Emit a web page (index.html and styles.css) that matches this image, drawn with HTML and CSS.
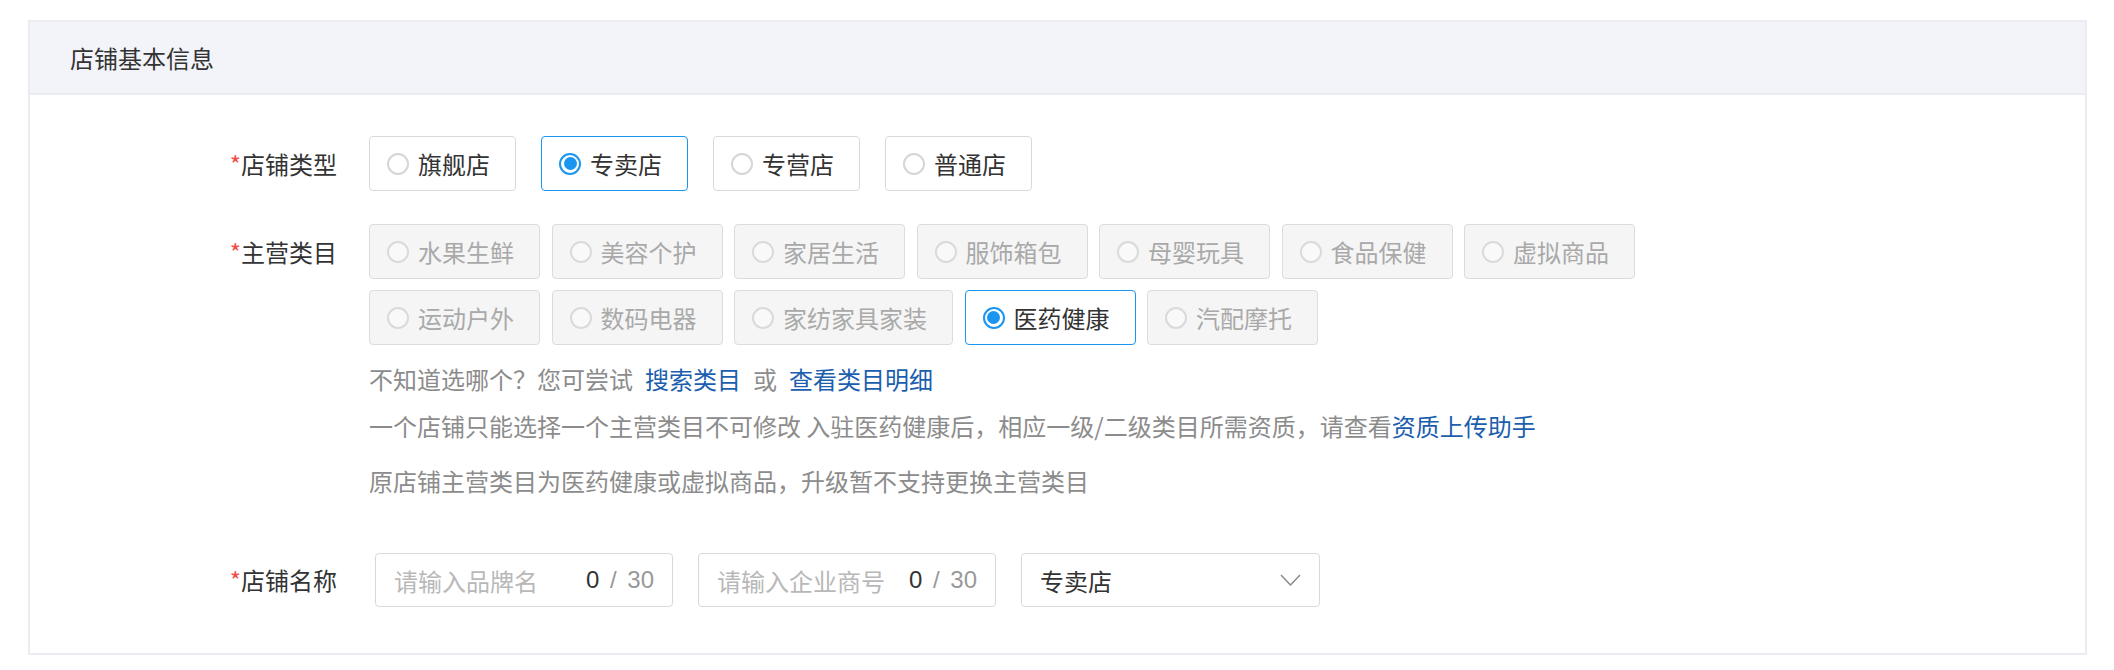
FILE: index.html
```html
<!DOCTYPE html>
<html lang="zh-CN">
<head>
<meta charset="utf-8">
<title>店铺基本信息</title>
<link rel="stylesheet" href="styles.css">
</head>
<body>
<div class="card">
  <div class="card-header">店铺基本信息</div>
  <div class="card-body">
    <div class="form-row">
      <div class="label"><span class="req">*</span>店铺类型</div>
      <div class="field">
        <div class="options">
          <div class="opt"><span class="radio"></span>旗舰店</div>
          <div class="opt selected"><span class="radio"></span>专卖店</div>
          <div class="opt"><span class="radio"></span>专营店</div>
          <div class="opt"><span class="radio"></span>普通店</div>
        </div>
      </div>
    </div>

    <div class="form-row row-cat">
      <div class="label"><span class="req">*</span>主营类目</div>
      <div class="field">
        <div class="cat-lines">
          <div class="options cats">
            <div class="opt disabled"><span class="radio"></span>水果生鲜</div>
            <div class="opt disabled"><span class="radio"></span>美容个护</div>
            <div class="opt disabled"><span class="radio"></span>家居生活</div>
            <div class="opt disabled"><span class="radio"></span>服饰箱包</div>
            <div class="opt disabled"><span class="radio"></span>母婴玩具</div>
            <div class="opt disabled"><span class="radio"></span>食品保健</div>
            <div class="opt disabled"><span class="radio"></span>虚拟商品</div>
          </div>
          <div class="options cats">
            <div class="opt disabled"><span class="radio"></span>运动户外</div>
            <div class="opt disabled"><span class="radio"></span>数码电器</div>
            <div class="opt disabled"><span class="radio"></span>家纺家具家装</div>
            <div class="opt selected"><span class="radio"></span>医药健康</div>
            <div class="opt disabled"><span class="radio"></span>汽配摩托</div>
          </div>
        </div>
        <div class="hint hint-1">不知道选哪个？您可尝试<a class="link link-first" href="#">搜索类目</a><span class="or">或</span><a class="link" href="#">查看类目明细</a></div>
        <div class="hint hint-2">一个店铺只能选择一个主营类目不可修改 入驻医药健康后，相应一级/二级类目所需资质，请查看<a class="link" href="#">资质上传助手</a></div>
        <div class="hint hint-3">原店铺主营类目为医药健康或虚拟商品，升级暂不支持更换主营类目</div>
      </div>
    </div>

    <div class="form-row row-name">
      <div class="label label-name"><span class="req">*</span>店铺名称</div>
      <div class="field">
        <div class="inputs">
          <div class="input"><input type="text" placeholder="请输入品牌名"><span class="count"><b>0</b> / 30</span></div>
          <div class="input"><input type="text" placeholder="请输入企业商号"><span class="count"><b>0</b> / 30</span></div>
          <div class="select"><span>专卖店</span><svg class="chev" width="21" height="12" viewBox="0 0 21 12"><polyline points="1,1 10.5,11 20,1" fill="none" stroke="#8c8c8c" stroke-width="1.5"/></svg></div>
        </div>
      </div>
    </div>
  </div>
</div>
</body>
</html>
```

FILE: styles.css
```css
* { box-sizing: border-box; }

body {
  margin: 0;
  background: #fff;
  font-family: "Noto Sans CJK SC", "Noto Sans", sans-serif;
  font-size: 24px;
  color: #333;
}

.card {
  margin: 20px 27px 0 28px;
  border: 2px solid #ebebf2;
  background: #fff;
}

.card-header {
  height: 73px;
  line-height: 71px;
  padding-left: 40px;
  background: #f3f4f9;
  border-bottom: 2px solid #ebebf2;
  color: #333;
}

.card-body {
  padding: 41px 0 46px;
}

.form-row {
  display: flex;
  align-items: flex-start;
}

.label {
  flex: none;
  width: 307px;
  margin-right: 32px;
  text-align: right;
  line-height: 55px;
  white-space: nowrap;
  color: #333;
}

.label-name { line-height: 54px; }

.req { color: #f24a4a; }

.field { flex: 1; min-width: 0; }

.row-cat { margin-top: 33px; }
.row-name { margin-top: 54px; }

.options {
  display: flex;
  gap: 25px;
}

.options.cats { gap: 11.5px; }

.cat-lines {
  display: flex;
  flex-direction: column;
  gap: 11px;
}

.opt {
  display: flex;
  align-items: center;
  height: 55px;
  padding: 0 25px 0 17px;
  border: 1.5px solid #d9d9d9;
  border-radius: 4px;
  background: #fff;
  color: #333;
  white-space: nowrap;
}

.radio {
  position: relative;
  flex: none;
  width: 22px;
  height: 22px;
  margin-right: 9px;
  border: 2px solid #d6d6d6;
  border-radius: 50%;
  background: #fff;
}

.opt.selected { border-color: #1a96f0; }
.opt.selected .radio { border-color: #1a96f0; }
.opt.selected .radio::after {
  content: "";
  position: absolute;
  inset: 2.5px;
  border-radius: 50%;
  background: #1a96f0;
}

.opt.disabled {
  background: #f5f5f5;
  border-color: #dcdcdc;
  color: #a9a9a9;
}
.opt.disabled .radio {
  border-color: #dadada;
  background: #f9f9f9;
}

.hint {
  line-height: 36px;
  color: #8c8c8c;
  white-space: nowrap;
}
.hint-1 { margin-top: 16px; }
.hint-2 { margin-top: 11px; }
.hint-3 { margin-top: 19px; }

.link {
  color: #1b5eae;
  text-decoration: none;
}
.link-first { margin-left: 12px; }
.or { margin: 0 12px; }

.inputs {
  display: flex;
  gap: 25px;
  margin-left: 6px;
}

.input {
  display: flex;
  align-items: center;
  width: 298px;
  height: 54px;
  padding: 0 18px;
  border: 1.5px solid #d9d9d9;
  border-radius: 4px;
  background: #fff;
}

.input input {
  flex: 1;
  min-width: 0;
  padding: 0;
  border: 0;
  outline: 0;
  background: transparent;
  font: inherit;
  color: #333;
}
.input input::placeholder { color: #b8b8b8; }

.count {
  flex: none;
  font-family: "Liberation Sans", "Noto Sans CJK SC", sans-serif;
  color: #999;
  word-spacing: 4px;
  white-space: nowrap;
}
.count b { font-weight: normal; color: #333; }

.select {
  display: flex;
  align-items: center;
  justify-content: space-between;
  width: 299px;
  height: 54px;
  padding: 0 18px;
  border: 1.5px solid #d9d9d9;
  border-radius: 4px;
  background: #fff;
  color: #333;
}

.chev { flex: none; display: block; }
```
